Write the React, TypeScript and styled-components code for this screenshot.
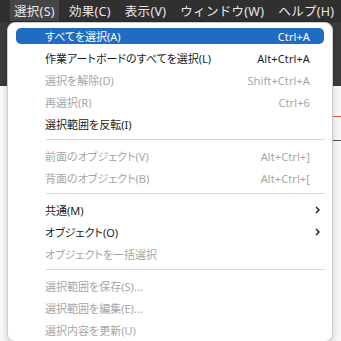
import styled, { createGlobalStyle } from 'styled-components';

const GlobalStyle = createGlobalStyle`
  html, body {
    margin: 0;
    padding: 0;
    background: #f6f6f6;
  }
  body {
    font-family: "Noto Sans", "Noto Sans CJK JP", sans-serif;
  }
`;

const Page = styled.div`
  position: relative;
  width: 341px;
  height: 341px;
  overflow: hidden;
  display: flex;
  flex-direction: column;
  background: #f6f6f6;
`;

const MenuBar = styled.div`
  height: 21px;
  flex-shrink: 0;
  display: flex;
  align-items: stretch;
  gap: 6px;
  padding-left: 10px;
  background: #303030;
`;

const MenuTitle = styled.div<{ $active?: boolean }>`
  display: flex;
  align-items: center;
  padding: 0 4px;
  font-size: 12.5px;
  letter-spacing: 0.3px;
  color: #e8e8e8;
  background: ${(p) => (p.$active ? '#464646' : 'transparent')};
  white-space: nowrap;
`;

const Toolbar = styled.div`
  height: 64px;
  flex-shrink: 0;
  background: #3b3b3b;
  border-top: 1px solid #2a2a2a;
`;

const Canvas = styled.div`
  position: relative;
  flex: 1;
  background: #f7f7f7;
`;

const CanvasLine = styled.div<{ $color: string }>`
  position: absolute;
  right: 0;
  width: 8px;
  height: 1px;
  background: ${(p) => p.$color};
`;

const Dropdown = styled.div`
  position: absolute;
  top: 22px;
  left: 7px;
  width: 326px;
  box-sizing: border-box;
  padding: 2px 8px 0;
  background: #ffffff;
  border: 1px solid #cdcdcd;
  border-radius: 8px;
  box-shadow: 0 2px 6px rgba(0, 0, 0, 0.18);
  font-size: 11px;
  font-feature-settings: "palt";
`;

const Item = styled.div`
  height: 22px;
  padding: 3px 0;
  box-sizing: border-box;
`;

const ItemBody = styled.div<{ $selected?: boolean; $disabled?: boolean }>`
  height: 16px;
  display: flex;
  align-items: center;
  padding: 0 4px 0 29px;
  border-radius: 5px;
  background: ${(p) => (p.$selected ? '#1f6cc2' : 'transparent')};
  color: ${(p) => (p.$selected ? '#ffffff' : p.$disabled ? '#a6a6a6' : '#1b1b1b')};
  white-space: nowrap;
`;

const Label = styled.span`
  flex: 1;
`;

const Shortcut = styled.span`
  letter-spacing: 0.1px;
`;

const Trail = styled.span`
  width: 10px;
  display: flex;
  justify-content: flex-end;
  align-items: center;
`;

const Separator = styled.div`
  height: 1px;
  margin: 4px -1px 5px 30px;
  background: #d9d9d9;
`;

type Entry =
  | { label: string; shortcut?: string; disabled?: boolean; selected?: boolean; sub?: boolean }
  | 'sep';

const entries: Entry[] = [
  { label: 'すべてを選択(A)', shortcut: 'Ctrl+A', selected: true },
  { label: '作業アートボードのすべてを選択(L)', shortcut: 'Alt+Ctrl+A' },
  { label: '選択を解除(D)', shortcut: 'Shift+Ctrl+A', disabled: true },
  { label: '再選択(R)', shortcut: 'Ctrl+6', disabled: true },
  { label: '選択範囲を反転(I)' },
  'sep',
  { label: '前面のオブジェクト(V)', shortcut: 'Alt+Ctrl+]', disabled: true },
  { label: '背面のオブジェクト(B)', shortcut: 'Alt+Ctrl+[', disabled: true },
  'sep',
  { label: '共通(M)', sub: true },
  { label: 'オブジェクト(O)', sub: true },
  { label: 'オブジェクトを一括選択', disabled: true },
  'sep',
  { label: '選択範囲を保存(S)...', disabled: true },
  { label: '選択範囲を編集(E)...', disabled: true },
  { label: '選択内容を更新(U)', disabled: true },
];

const Chevron = () => (
  <svg width="5" height="8" viewBox="0 0 5 8">
    <path d="M1 1 L4 4 L1 7" fill="none" stroke="#1b1b1b" strokeWidth="1.4" />
  </svg>
);

const menus = ['選択(S)', '効果(C)', '表示(V)', 'ウィンドウ(W)', 'ヘルプ(H)'];

export default function App() {
  return (
    <>
      <GlobalStyle />
      <Page>
        <MenuBar>
          {menus.map((m, i) => (
            <MenuTitle key={m} $active={i === 0}>
              {m}
            </MenuTitle>
          ))}
        </MenuBar>
        <Toolbar />
        <Canvas>
          <CanvasLine $color="#e0563c" style={{ top: 30 }} />
          <CanvasLine $color="#555555" style={{ top: 54 }} />
        </Canvas>
        <Dropdown>
          {entries.map((e, i) =>
            e === 'sep' ? (
              <Separator key={i} />
            ) : (
              <Item key={i}>
                <ItemBody $selected={e.selected} $disabled={e.disabled}>
                  <Label>{e.label}</Label>
                  {e.shortcut && <Shortcut>{e.shortcut}</Shortcut>}
                  <Trail>{e.sub && <Chevron />}</Trail>
                </ItemBody>
              </Item>
            )
          )}
        </Dropdown>
      </Page>
    </>
  );
}
